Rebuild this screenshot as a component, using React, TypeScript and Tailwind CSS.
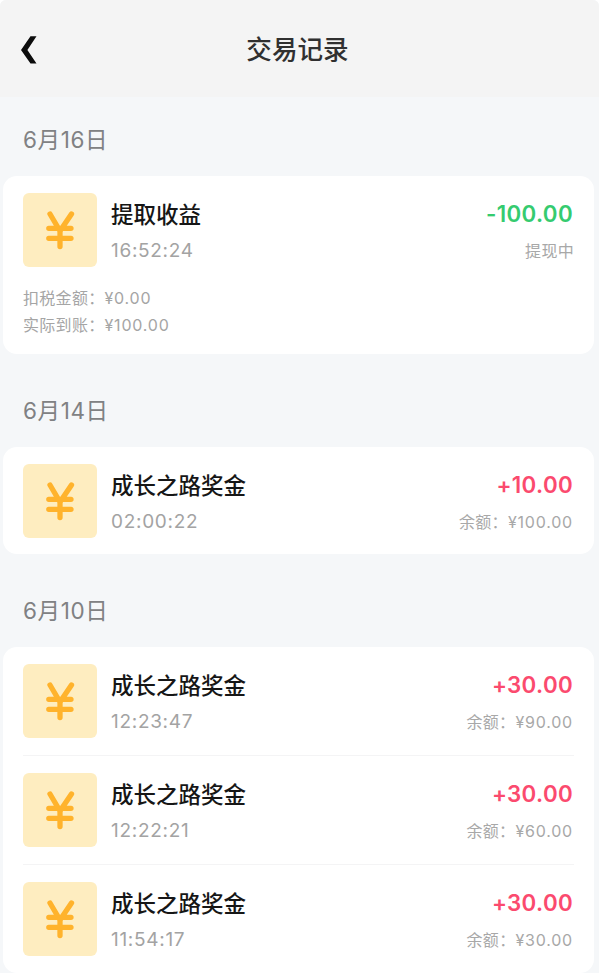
import clsx from 'clsx';

type Entry = {
  title: string;
  time: string;
  amount: string;
  note: string;
  money?: string;
  details?: { label: string; money: string }[];
};

const groups: { date: string; entries: Entry[] }[] = [
  {
    date: '6月16日',
    entries: [
      {
        title: '提取收益',
        time: '16:52:24',
        amount: '-100.00',
        note: '提现中',
        details: [
          { label: '扣税金额：', money: '¥0.00' },
          { label: '实际到账：', money: '¥100.00' },
        ],
      },
    ],
  },
  {
    date: '6月14日',
    entries: [
      { title: '成长之路奖金', time: '02:00:22', amount: '+10.00', note: '余额：', money: '¥100.00' },
    ],
  },
  {
    date: '6月10日',
    entries: [
      { title: '成长之路奖金', time: '12:23:47', amount: '+30.00', note: '余额：', money: '¥90.00' },
      { title: '成长之路奖金', time: '12:22:21', amount: '+30.00', note: '余额：', money: '¥60.00' },
      { title: '成长之路奖金', time: '11:54:17', amount: '+30.00', note: '余额：', money: '¥30.00' },
    ],
  },
];

const YenTile = () => (
  <div className="w-[74px] h-[74px] shrink-0 rounded-md bg-[#feedc0]">
    <svg
      viewBox="0 0 74 74"
      fill="none"
      stroke="#ffb32c"
      strokeWidth="5.3"
      strokeLinecap="round"
      strokeLinejoin="round"
    >
      <path d="M27 21l10 17 11.500-17M37 38v15.500M25.800 35.300h22.200M25.800 45.300h22.200" />
    </svg>
  </div>
);

const EntryRow = ({ entry }: { entry: Entry }) => (
  <div>
    <div className="flex">
      <YenTile />
      <div className="flex-1 ml-3.5">
        <div className="mt-[7px] text-[22.5px] leading-[30px] font-medium text-[#161616]">
          {entry.title}
        </div>
        <div className="mt-[9px] text-[19px] leading-6 tracking-[0.7px] text-[#a3a3a3]">
          {entry.time}
        </div>
      </div>
      <div className="text-right">
        <div
          className={clsx(
            'mt-1.5 text-[22.3px] leading-[30px] font-semibold tracking-[0.35px]',
            entry.amount.startsWith('-') ? 'text-[#35cb6f]' : 'text-[#fb4a6e]'
          )}
        >
          <span className="mr-px">{entry.amount}</span>
        </div>
        <div className="mt-2.5 text-base leading-6 tracking-[0.3px] text-[#a8a8a8]">
          {entry.note}
          {entry.money && <span className="mr-px tracking-[0.8px]">{entry.money}</span>}
        </div>
      </div>
    </div>
    {entry.details && (
      <div className="mt-[18px] -mb-px text-base leading-[27px] tracking-[0.3px] text-[#a5a5a5]">
        {entry.details.map((line) => (
          <div key={line.label}>
            {line.label}
            <span className="tracking-[0.8px]">{line.money}</span>
          </div>
        ))}
      </div>
    )}
  </div>
);

export default function App() {
  return (
    <div className="w-[604px] h-[973px] overflow-hidden bg-white font-['Inter','Noto_Sans_CJK_SC',sans-serif]">
      <div className="w-[599px] h-full rounded-t-md overflow-hidden bg-[#f5f7f9]">
        {/* Header */}
        <div className="grid grid-cols-[1fr_auto_1fr] items-center h-[97px] pl-5 pr-6 bg-[#f4f4f4]">
          <svg className="w-5 h-[30px] mt-0.5" viewBox="0 0 20 30" fill="#0c0c0c">
            <path d="M10.500 1.300h6L7.400 15l9.100 13.500h-6L1 15z" />
          </svg>
          <h1 className="pt-[3px] text-[25.6px] leading-9 font-medium text-[#303030]">交易记录</h1>
        </div>
        {/* Records by day */}
        {groups.map((group, i) => (
          <section key={group.date}>
            <h2
              className={clsx(
                'flex items-center pl-[23px] text-[22.5px] tracking-[0.6px] text-[#808183]',
                i === 0 ? 'h-[79px] pt-1.5' : 'h-[93px] pt-5'
              )}
            >
              {group.date}
            </h2>
            <div
              className={clsx('ml-[3px] mr-[5px] px-5 pt-[17px] bg-white rounded-[14px]', {
                'pb-4': group.entries.length === 1,
                'pb-[17px]': group.entries.length > 1,
              })}
            >
              {group.entries.map((entry, j) => (
                <div
                  key={entry.time}
                  className={clsx({
                    'mt-[17px] pt-[17.2px] border-t border-[#f4f4f5]': j > 0,
                  })}
                >
                  <EntryRow entry={entry} />
                </div>
              ))}
            </div>
          </section>
        ))}
      </div>
    </div>
  );
}
